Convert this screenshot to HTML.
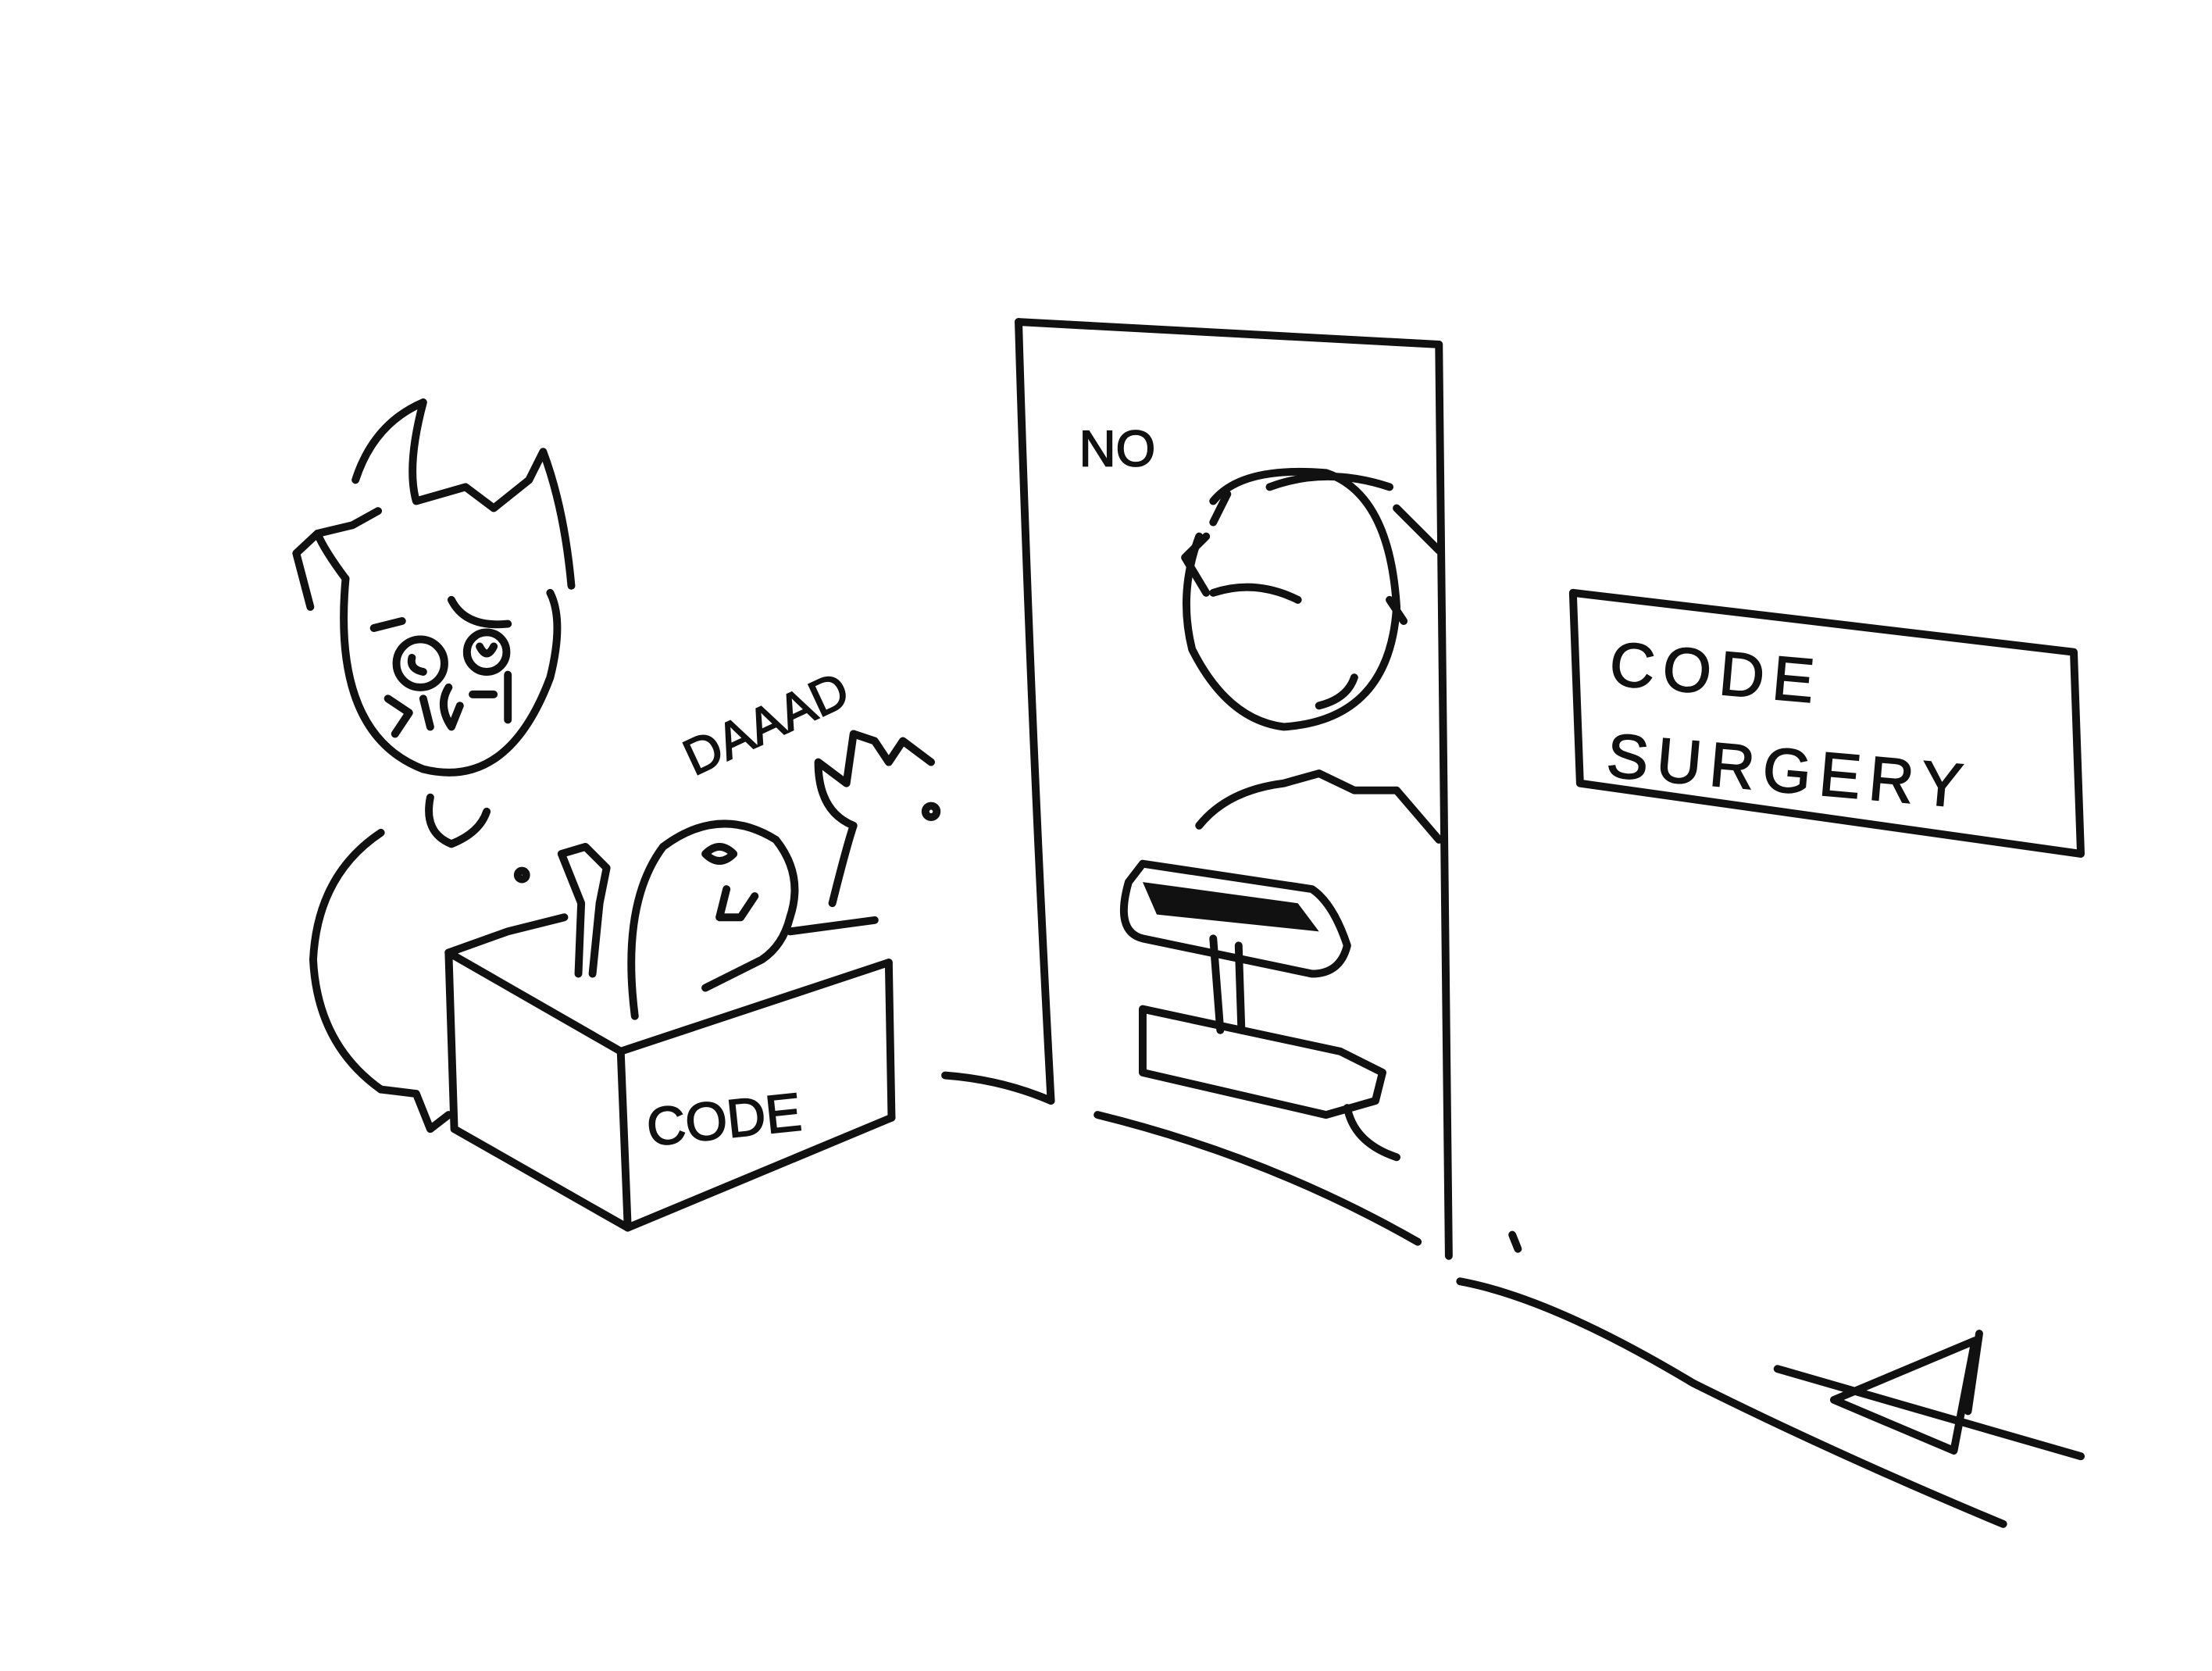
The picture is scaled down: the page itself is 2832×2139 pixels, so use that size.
<!DOCTYPE html>
<html><head><meta charset="utf-8"><style>
html,body{margin:0;padding:0;background:#fff;}
svg{display:block;}
text{font-family:"Liberation Sans",sans-serif;fill:#111;}
</style></head><body>
<svg width="2832" height="2139" viewBox="0 0 1568 1184" xmlns="http://www.w3.org/2000/svg">
<rect width="1568" height="1184" fill="#fff"/>
<g fill="none" stroke="#111" stroke-width="5.5" stroke-linecap="round" stroke-linejoin="round">
<!-- door -->
<path d="M722 228 L1020 244"/>
<path d="M722 228 Q730 500 745 780"/>
<path d="M1020 244 Q1022 560 1027 890"/>
<!-- floor -->
<path d="M670 762 Q710 765 745 780"/>
<path d="M778 790 Q900 820 1005 880"/>
<path d="M1035 908 Q1100 920 1200 980 Q1300 1030 1420 1080"/>
<path d="M1072 875 L1076 885"/>
<!-- signature -->
<path d="M1260 970 L1475 1032"/>
<path d="M1300 992 L1400 950 L1385 1028 Z"/>
<path d="M1403 945 L1395 1000"/>
<!-- sign -->
<path d="M1115 420 L1470 462 L1475 605 L1120 555 Z"/>
<!-- person head -->
<path d="M245 410 Q235 520 300 545 Q360 560 390 480 Q400 440 390 420"/>
<path d="M300 285 Q265 300 252 340 M300 285 Q288 330 295 355 L330 345 L350 360 L375 340 L385 320 Q400 360 405 415"/>
<path d="M245 410 Q230 390 225 378 L210 392 L220 430 M225 378 L250 372 L268 362"/>
<!-- face -->
<circle cx="298" cy="470" r="17"/><circle cx="345" cy="462" r="14"/>
<path d="M292 466 Q290 474 300 476 M340 458 Q345 468 350 458"/>
<path d="M265 445 L285 440 M320 425 Q330 445 360 442 M318 487 Q310 500 320 515 L326 500 M335 492 L350 492 M360 478 L360 510"/>
<path d="M275 495 L290 505 L280 520 M300 495 L305 515"/>
<!-- neck/body -->
<path d="M305 565 Q300 590 320 598 Q340 590 345 575"/>
<path d="M270 590 Q225 620 222 680 Q225 740 270 772"/>
<path d="M270 772 L295 775 L305 800 L318 790"/>
<!-- box -->
<path d="M318 675 L322 800 L445 870"/>
<path d="M318 675 L440 745 L630 682"/>
<path d="M440 745 L445 870 L632 792"/>
<path d="M630 682 L632 792"/>
<path d="M318 675 L360 660 L400 650"/>
<path d="M560 660 L620 652"/>
<!-- monster -->
<path d="M450 720 Q440 640 470 600 Q510 570 550 595 Q570 620 560 650"/>
<path d="M500 700 Q520 690 540 680 Q555 670 560 650"/>
<path d="M500 605 Q510 595 520 605 Q510 615 500 605"/>
<path d="M515 630 L510 650 L525 650 L535 635"/>
<path d="M410 690 L412 640 L398 605 L415 600 L430 615 L425 640 L420 690"/>
<path d="M590 640 Q600 600 605 585 Q580 575 580 540 L600 555 L605 520 L620 525 L630 540 L640 525 L660 540"/>
<circle cx="370" cy="620" r="3"/><circle cx="660" cy="575" r="4"/>
<!-- doctor -->
<path d="M850 380 Q835 420 845 460 Q870 510 910 515 Q985 510 990 430 Q985 350 940 335 Q880 330 860 355"/>
<path d="M855 380 L840 395 L855 420 M870 350 L860 370 M900 345 Q940 330 985 345"/>
<path d="M860 420 Q890 410 920 425 M960 480 Q955 495 935 500 M985 425 L995 440"/>
<path d="M990 360 L1020 390"/>
<path d="M850 585 Q870 560 910 555 L935 548 L960 560 L990 560 L1020 595"/>
<!-- lamp / machine -->
<path d="M800 625 Q790 660 810 665 L930 690 Q950 690 955 670 Q945 640 930 630 L810 612 Z"/>
<path d="M860 665 L865 730 M878 670 L880 730"/>
<path d="M810 715 L950 745 L980 760 L975 780 L940 790 L810 760 Z"/>
<path d="M955 785 Q960 810 990 820"/>
</g>
<path d="M810 625 L920 640 L935 660 L820 648 Z" fill="#111"/>
<text x="765" y="330" font-size="36" stroke="#111" stroke-width="1">NO</text>
<text x="460" y="812" font-size="38" stroke="#111" stroke-width="1" transform="rotate(-6 460 812)">CODE</text>
<text x="492" y="550" font-size="36" stroke="#111" stroke-width="1" transform="rotate(-25 492 550)">DAAAD</text>
<text x="1140" y="485" font-size="44" letter-spacing="6" stroke="#111" stroke-width="1" transform="rotate(5 1140 485)">CODE</text>
<text x="1138" y="550" font-size="44" letter-spacing="6" stroke="#111" stroke-width="1" transform="rotate(5 1138 550)">SURGERY</text>
</svg>
</body></html>
